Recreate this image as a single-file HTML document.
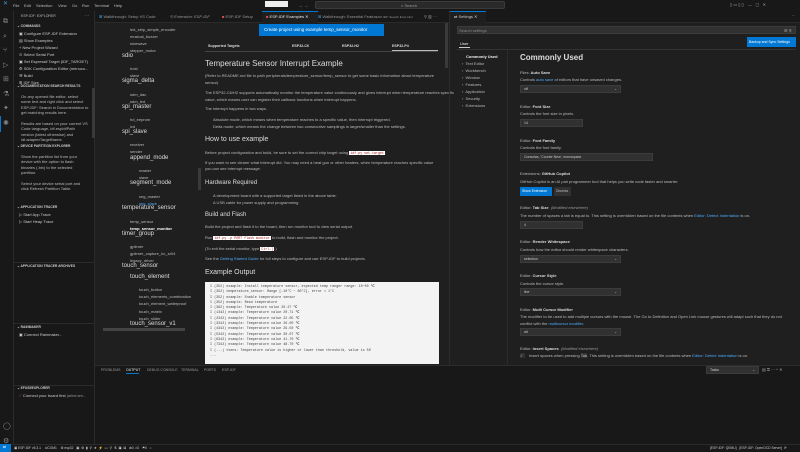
<!DOCTYPE html>
<html><head><meta charset="utf-8"><style>
*{margin:0;padding:0;box-sizing:border-box}
body{width:800px;height:452px;overflow:hidden;background:#1f1f1f;font-family:"Liberation Sans",sans-serif;color:#ccc;position:relative}
.a{position:absolute}
.t{position:absolute;white-space:nowrap;font-size:4px;line-height:5px;color:#bbb}
.h{position:absolute;white-space:nowrap;color:#ddd}
.b{font-weight:bold;color:#ddd}
.sec{position:absolute;white-space:nowrap;font-size:3.3px;font-weight:bold;color:#ccc;left:17px}
.dd{position:absolute;background:#313131;border:0.5px solid #3c3c3c;font-size:3.5px;color:#ccc;padding-left:3px;line-height:7px}
.lnk{color:#4daafc}
.code{background:#fff;color:#a31515;font-family:"Liberation Mono",monospace;font-size:3.3px;padding:0 1px}
.mono{font-family:"Liberation Mono",monospace;font-size:3.4px;color:#444;line-height:5.3px}
</style></head><body>
<!-- title bar -->
<div class="a" style="left:0;top:0;width:800px;height:11px;background:#181818"></div>
<div class="t" style="left:3px;top:2px;color:#3c9bdc;font-size:6px">✕</div>
<div class="t" style="left:13px;top:3px">File</div><div class="t" style="left:24px;top:3px">Edit</div><div class="t" style="left:36px;top:3px">Selection</div><div class="t" style="left:58px;top:3px">View</div><div class="t" style="left:72px;top:3px">Go</div><div class="t" style="left:82px;top:3px">Run</div><div class="t" style="left:94px;top:3px">Terminal</div><div class="t" style="left:114px;top:3px">Help</div>
<div class="a" style="left:265px;top:1px;width:23px;height:6px;background:#eee"></div>
<div class="t" style="left:299px;top:3px">← →</div>
<div class="a" style="left:315px;top:1px;width:190px;height:8px;background:#2a2a2a;border:0.5px solid #3a3a3a;border-radius:2px"></div>
<div class="t" style="left:401px;top:3px;color:#999">⌕ Search</div>
<div class="t" style="left:730px;top:2px;color:#aaa">▯ ▭ ▯ ▯ &nbsp;&nbsp; — &nbsp; ▢ &nbsp; ✕</div>
<!-- activity bar -->
<div class="a" style="left:0;top:11px;width:14px;height:433px;background:#181818;border-right:0.5px solid #2b2b2b"></div>
<div class="t" style="left:3px;top:15px;font-size:7px;color:#888;line-height:14.5px">⧉<br>⌕<br>⑂<br>▷<br>⊞<br>⚗<br>✦<br>✺</div>
<div class="a" style="left:0;top:116px;width:1px;height:16px;background:#0078d4"></div>
<div class="t" style="left:3px;top:419px;font-size:7px;color:#888;line-height:15px">◯<br>⚙</div>
<!-- sidebar -->
<div class="a" style="left:14px;top:11px;width:81px;height:433px;background:#181818;border-right:0.5px solid #2b2b2b"></div>
<div class="t" style="left:21px;top:14px;font-size:3.5px">ESP-IDF: EXPLORER</div><div class="t" style="left:85px;top:13px">···</div>
<div class="sec" style="top:24px">⌄ COMMANDS</div>
<div class="t" style="left:19px;top:30px;line-height:7px;color:#ccc">▣ Configure ESP-IDF Extension<br>▤ Show Examples<br>+ New Project Wizard<br>⊙ Select Serial Port<br>▣ Set Espressif Target (IDF_TARGET)<br>⚙ SDK Configuration Editor (menuco...<br>⚒ Build<br>⊞ IDF Size</div>
<div class="sec" style="top:84px">⌄ DOCUMENTATION SEARCH RESULTS</div>
<div class="a" style="left:92px;top:88px;width:3px;height:50px;background:#3a3a3a"></div>
<div class="t" style="left:21px;top:94px;line-height:5.4px;color:#bbb">On any opened file editor, select<br>some text and right click and select<br>ESP-IDF: Search in Documentation to<br>get matching results here.</div>
<div class="t" style="left:21px;top:121px;line-height:5.4px;color:#bbb">Results are based on your current VS<br>Code language, idf.espIdfPath<br>version (latest otherwise) and<br>idf.adapterTargetName.</div>
<div class="sec" style="top:144px">⌄ DEVICE PARTITION EXPLORER</div>
<div class="t" style="left:21px;top:154px;line-height:5.4px;color:#bbb">Show the partition list from your<br>device with the option to flash<br>binaries (.bin) to the selected<br>partition.</div>
<div class="t" style="left:21px;top:181px;line-height:5.4px;color:#bbb">Select your device serial port and<br>click Refresh Partition Table.</div>
<div class="sec" style="top:205px">⌄ APPLICATION TRACER</div>
<div class="t" style="left:19px;top:211px;line-height:7px;color:#ccc">▷ Start App Trace<br>▷ Start Heap Trace</div>
<div class="a" style="left:14px;top:262px;width:81px;height:0.5px;background:#2b2b2b"></div>
<div class="sec" style="top:264px">⌄ APPLICATION TRACER ARCHIVES</div>
<div class="a" style="left:14px;top:323px;width:81px;height:0.5px;background:#2b2b2b"></div>
<div class="sec" style="top:325px">⌄ RAINMAKER</div>
<div class="t" style="left:19px;top:332px;color:#ccc">▣ Connect Rainmaker...</div>
<div class="a" style="left:14px;top:385px;width:81px;height:0.5px;background:#2b2b2b"></div>
<div class="sec" style="top:386px">⌄ EFUSEEXPLORER</div>
<div class="t" style="left:19px;top:393px;color:#ccc"><span style="color:#e05050">⟋</span> Connect your board first <span style="font-size:3.3px;color:#999">(select seri...</span></div>
<!-- tabs row left -->
<div class="a" style="left:95px;top:11px;width:355px;height:12px;background:#181818;border-bottom:0.5px solid #2b2b2b"></div>
<div class="t" style="left:99px;top:14px;color:#999"><span style="color:#3c9bdc">⊠</span> Walkthrough: Setup VS Code</div>
<div class="t" style="left:170px;top:14px;color:#999;font-style:italic">⎘ Extension: ESP-IDF</div>
<div class="t" style="left:222px;top:14px;color:#999"><span style="color:#e05050">■</span> ESP-IDF Setup</div>
<div class="a" style="left:262px;top:11px;width:56px;height:12px;background:#1f1f1f;border-top:0.5px solid #0078d4"></div>
<div class="t" style="left:266px;top:14px;color:#eee"><span style="color:#e05050">■</span> ESP-IDF Examples ✕</div>
<div class="t" style="left:318px;top:14px;color:#999"><span style="color:#3c9bdc">⊠</span> Walkthrough: Essential Featur<span style="font-size:3px">ESP-IDF: Search Error Hint</span></div>
<div class="t" style="left:424px;top:14px;color:#999">⚲ ▥ ···</div>
<!-- nav tree -->
<div class="a" style="left:95px;top:23px;width:105px;height:342px;background:#1f1f1f"></div>
<div class="t" style="left:130px;top:26px;line-height:7px">led_strip_simple_encoder<br>musical_buzzer<br>sinewave<br>stepper_motor</div>
<div class="h" style="left:122px;top:53px;font-size:6px">sdio</div>
<div class="t" style="left:130px;top:65px;line-height:7px">host<br>slave</div>
<div class="h" style="left:122px;top:78px;font-size:6px">sigma_delta</div>
<div class="t" style="left:130px;top:91px;line-height:7px">sdm_dac<br>sdm_led</div>
<div class="h" style="left:122px;top:104px;font-size:6px">spi_master</div>
<div class="t" style="left:130px;top:116px;line-height:7px">hd_eeprom<br>lcd</div>
<div class="h" style="left:122px;top:129px;font-size:6px">spi_slave</div>
<div class="t" style="left:130px;top:141px;line-height:7px">receiver<br>sender</div>
<div class="h" style="left:130px;top:155px;font-size:6px">append_mode</div>
<div class="t" style="left:139px;top:167px;line-height:7px">master<br>slave</div>
<div class="h" style="left:130px;top:180px;font-size:6px">segment_mode</div>
<div class="t" style="left:139px;top:193px;line-height:7px">seg_master<br><span class="lnk">seg_slave</span></div>
<div class="h" style="left:122px;top:205px;font-size:6px">temperature_sensor</div>
<div class="t" style="left:130px;top:218px;line-height:7px">temp_sensor<br><b style="color:#fff">temp_sensor_monitor</b></div>
<div class="h" style="left:122px;top:231px;font-size:6px">timer_group</div>
<div class="t" style="left:130px;top:243px;line-height:7px">gptimer<br>gptimer_capture_hc_sr04<br>legacy_driver</div>
<div class="h" style="left:122px;top:263px;font-size:6px">touch_sensor</div>
<div class="h" style="left:130px;top:274px;font-size:6px">touch_element</div>
<div class="t" style="left:139px;top:286px;line-height:7.2px">touch_button<br>touch_elements_combination<br>touch_element_waterproof<br>touch_matrix<br>touch_slider</div>
<div class="h" style="left:130px;top:321px;font-size:6px">touch_sensor_v1</div>
<div class="a" style="left:103px;top:328px;width:82px;height:3px;background:#444"></div>
<div class="a" style="left:198px;top:168px;width:3px;height:22px;background:#3a3a3a"></div>
<!-- content -->
<div class="a" style="left:259px;top:24px;width:125px;height:12px;background:#0078d4"></div>
<div class="t" style="left:264px;top:27px;color:#fff;font-size:4.5px">Create project using example temp_sensor_monitor</div>
<div class="t b" style="left:208px;top:44px;font-size:3.6px">Supported Targets</div>
<div class="t b" style="left:292px;top:44px;font-size:3.6px">ESP32-C6</div>
<div class="t b" style="left:342px;top:44px;font-size:3.6px">ESP32-H2</div>
<div class="t b" style="left:392px;top:44px;font-size:3.6px">ESP32-P4</div>
<div class="a" style="left:205px;top:51px;width:233px;height:0.5px;background:#444"></div>
<div class="a" style="left:392px;top:50px;width:46px;height:1px;background:#bbb"></div>
<div class="h" style="left:205px;top:59px;font-size:8px">Temperature Sensor Interrupt Example</div>
<div class="t" style="left:205px;top:72px;line-height:7px">(Refer to README.md file in path peripherals/temperature_sensor/temp_sensor to get some basic information about temperature<br>sensor)</div>
<div class="t" style="left:205px;top:89px;line-height:7px">The ESP32-C6/H2 supports automatically monitor the temperature value continuously and gives interrupt when temperature reaches specific<br>value, which means user can register their callback functions when interrupt happens.</div>
<div class="t" style="left:205px;top:106px">The interrupt happens in two ways.</div>
<div class="t" style="left:213px;top:116px;line-height:7px">Absolute mode, which means when temperature reaches to a specific value, then interrupt triggered.<br>Delta mode, which means the change between two consecutive samplings is larger/smaller than the settings.</div>
<div class="h" style="left:205px;top:136px;font-size:7px">How to use example</div>
<div class="t" style="left:205px;top:150px">Before project configuration and build, be sure to set the correct chip target using <span class="code">idf.py set-target</span>.</div>
<div class="t" style="left:205px;top:160px;line-height:6px">If you want to see clearer what interrupt did. You may need a heat gun or other heaters, when temperature reaches specific value<br>you can see interrupt message.</div>
<div class="h" style="left:205px;top:180px;font-size:6px">Hardware Required</div>
<div class="t" style="left:213px;top:192px;line-height:7px">A development board with a supported target listed in the above table.<br>A USB cable for power supply and programming</div>
<div class="h" style="left:205px;top:212px;font-size:6px">Build and Flash</div>
<div class="t" style="left:205px;top:224px">Build the project and flash it to the board, then run monitor tool to view serial output.</div>
<div class="t" style="left:205px;top:235px">Run <span class="code">idf.py -p PORT flash monitor</span> to build, flash and monitor the project.</div>
<div class="t" style="left:205px;top:246px">(To exit the serial monitor, type <span class="code" style="color:#a31515">Ctrl-]</span>.)</div>
<div class="t" style="left:205px;top:256px">See the <span class="lnk">Getting Started Guide</span> for full steps to configure and use ESP-IDF to build projects.</div>
<div class="h" style="left:205px;top:269px;font-size:7px">Example Output</div>
<div class="a" style="left:205px;top:282px;width:234px;height:82px;background:#f3f3f3"></div>
<div class="t mono" style="left:210px;top:285px">I (352) example: Install temperature sensor, expected temp ranger range: 10~50 ℃<br>I (352) temperature_sensor: Range [-10°C ~ 80°C], error &lt; 1°C<br>I (352) example: Enable temperature sensor<br>I (352) example: Read temperature<br>I (362) example: Temperature value 20.27 ℃<br>I (1342) example: Temperature value 20.71 ℃<br>I (2342) example: Temperature value 22.05 ℃<br>I (3342) example: Temperature value 26.00 ℃<br>I (4342) example: Temperature value 29.50 ℃<br>I (5342) example: Temperature value 30.07 ℃<br>I (6342) example: Temperature value 41.70 ℃<br>I (7342) example: Temperature value 48.70 ℃<br>I (...) tsens: Temperature value is higher or lower than threshold, value is 50<br>...</div>
<div class="a" style="left:445px;top:23px;width:3px;height:45px;background:#3a3a3a"></div>
<div class="a" style="left:449px;top:11px;width:0.5px;height:354px;background:#2b2b2b"></div>
<!-- settings -->
<div class="a" style="left:450px;top:11px;width:350px;height:12px;background:#181818;border-bottom:0.5px solid #2b2b2b"></div>
<div class="a" style="left:450px;top:11px;width:36px;height:12px;background:#1f1f1f;border-top:0.5px solid #0078d4"></div>
<div class="t" style="left:454px;top:14px;color:#ccc">⇄ Settings ✕</div>
<div class="t" style="left:792px;top:13px">··</div>
<div class="a" style="left:457px;top:26px;width:339px;height:8px;background:#313131;border:0.5px solid #3c3c3c"></div>
<div class="t" style="left:459px;top:28px;color:#888">Search settings</div>
<div class="t" style="left:784px;top:28px">☰ ⚲</div>
<div class="t" style="left:460px;top:41px;color:#eee">User</div>
<div class="a" style="left:459px;top:47px;width:11px;height:0.5px;background:#ccc"></div>
<div class="a" style="left:747px;top:37px;width:49px;height:10px;background:#0078d4"></div>
<div class="t" style="left:749px;top:40px;color:#fff;font-size:3.5px">Backup and Sync Settings</div>
<div class="a" style="left:457px;top:49px;width:339px;height:0.5px;background:#333"></div>
<div class="t" style="left:466px;top:53px;line-height:7px"><b style="color:#eee">Commonly Used</b></div>
<div class="t" style="left:462px;top:60px;line-height:7px">›&nbsp; Text Editor<br>›&nbsp; Workbench<br>›&nbsp; Window<br>›&nbsp; Features<br>›&nbsp; Application<br>›&nbsp; Security<br>›&nbsp; Extensions</div>
<div class="a" style="left:507px;top:50px;width:0.5px;height:315px;background:#2b2b2b"></div>
<div class="h" style="left:520px;top:53px;font-size:8px;font-weight:bold">Commonly Used</div>
<div class="t" style="left:520px;top:70px">Files: <b class="b">Auto Save</b></div>
<div class="t" style="left:520px;top:77px">Controls <span class="lnk">auto save</span> of editors that have unsaved changes.</div>
<div class="dd" style="left:520px;top:85px;width:101px;height:8px">off<span style="float:right;padding-right:3px">⌄</span></div>
<div class="t" style="left:520px;top:104px">Editor: <b class="b">Font Size</b></div>
<div class="t" style="left:520px;top:111px">Controls the font size in pixels.</div>
<div class="dd" style="left:520px;top:119px;width:63px;height:8px">14</div>
<div class="t" style="left:520px;top:138px">Editor: <b class="b">Font Family</b></div>
<div class="t" style="left:520px;top:145px">Controls the font family.</div>
<div class="dd" style="left:520px;top:153px;width:133px;height:8px">Consolas, 'Courier New', monospace</div>
<div class="t" style="left:520px;top:171px">Extensions: <b class="b">GitHub Copilot</b></div>
<div class="t" style="left:520px;top:179px">GitHub Copilot is an AI pair programmer tool that helps you write code faster and smarter.</div>
<div class="a" style="left:520px;top:187px;width:32px;height:9px;background:#0078d4"></div>
<div class="t" style="left:522px;top:189px;color:#fff;font-size:3.5px">Show Extension</div>
<div class="a" style="left:554px;top:187px;width:17px;height:9px;background:#313131"></div>
<div class="t" style="left:556px;top:189px;font-size:3.5px">Dismiss</div>
<div class="t" style="left:520px;top:205px">Editor: <b class="b">Tab Size</b> &nbsp;<i style="color:#999">(Modified elsewhere)</i></div>
<div class="t" style="left:520px;top:213px">The number of spaces a tab is equal to. This setting is overridden based on the file contents when <span class="lnk">Editor: Detect Indentation</span> is on.</div>
<div class="dd" style="left:520px;top:221px;width:63px;height:8px">4</div>
<div class="t" style="left:520px;top:239px">Editor: <b class="b">Render Whitespace</b></div>
<div class="t" style="left:520px;top:247px">Controls how the editor should render whitespace characters.</div>
<div class="dd" style="left:520px;top:255px;width:101px;height:8px">selection<span style="float:right;padding-right:3px">⌄</span></div>
<div class="t" style="left:520px;top:273px">Editor: <b class="b">Cursor Style</b></div>
<div class="t" style="left:520px;top:281px">Controls the cursor style.</div>
<div class="dd" style="left:520px;top:288px;width:101px;height:8px">line<span style="float:right;padding-right:3px">⌄</span></div>
<div class="t" style="left:520px;top:307px">Editor: <b class="b">Multi Cursor Modifier</b></div>
<div class="t" style="left:520px;top:314px;line-height:6.5px">The modifier to be used to add multiple cursors with the mouse. The Go to Definition and Open Link mouse gestures will adapt such that they do not<br>conflict with the <span class="lnk">multicursor modifier</span>.</div>
<div class="dd" style="left:520px;top:328px;width:101px;height:8px">alt<span style="float:right;padding-right:3px">⌄</span></div>
<div class="t" style="left:520px;top:346px">Editor: <b class="b">Insert Spaces</b> &nbsp;<i style="color:#999">(Modified elsewhere)</i></div>
<div class="a" style="left:520px;top:353px;width:5px;height:5px;background:#313131"></div>
<div class="t" style="left:520px;top:353px;font-size:4px">✓</div>
<div class="t" style="left:529px;top:353px">Insert spaces when pressing <span style="background:#333">Tab</span>. This setting is overridden based on the file contents when <span class="lnk">Editor: Detect Indentation</span> is on.</div>
<!-- panel -->
<div class="a" style="left:95px;top:365px;width:705px;height:79px;background:#181818;border-top:0.5px solid #2b2b2b"></div>
<div class="t" style="left:101px;top:368px;color:#999;font-size:3.5px">PROBLEMS</div>
<div class="t" style="left:126px;top:368px;color:#eee;font-size:3.5px">OUTPUT</div>
<div class="a" style="left:126px;top:373px;width:13px;height:0.5px;background:#0078d4"></div>
<div class="t" style="left:147px;top:368px;color:#999;font-size:3.5px">DEBUG CONSOLE</div>
<div class="t" style="left:181px;top:368px;color:#999;font-size:3.5px">TERMINAL</div>
<div class="t" style="left:204px;top:368px;color:#999;font-size:3.5px">PORTS</div>
<div class="t" style="left:222px;top:368px;color:#999;font-size:3.5px">ESP-IDF</div>
<div class="dd" style="left:706px;top:366px;width:53px;height:8px;line-height:7px">Tasks<span style="float:right;padding-right:3px">⌄</span></div>
<div class="t" style="left:762px;top:367px;color:#aaa">▤ ⚿ ··· ^ ✕</div>
<!-- status bar -->
<div class="a" style="left:0;top:444px;width:800px;height:8px;background:#181818;border-top:0.5px solid #2b2b2b"></div>
<div class="a" style="left:0;top:444px;width:11px;height:8px;background:#0078d4"></div>
<div class="t" style="left:3px;top:445px;color:#fff;font-size:3.5px">⇄</div>
<div class="t" style="left:14px;top:446px;font-size:3.3px;color:#ccc">▣ ESP-IDF v5.3.1 &nbsp;&nbsp; ⊙COM1 &nbsp;&nbsp; ⚙ esp32 &nbsp; ▣ &nbsp;⚙ &nbsp;▮ &nbsp;⚲ &nbsp;★ &nbsp;⚡ &nbsp;▭ &nbsp;⚲ &nbsp;⚗ &nbsp;▣ &nbsp;⊠ &nbsp; ⊗0 ⚠0 &nbsp; ⚑0 &nbsp; ⌂</div>
<div class="t" style="left:710px;top:446px;font-size:3.3px;color:#ccc">[ESP-IDF: QEMU] &nbsp; [ESP-IDF: OpenOCD Server] &nbsp;⟳</div>
</body></html>
